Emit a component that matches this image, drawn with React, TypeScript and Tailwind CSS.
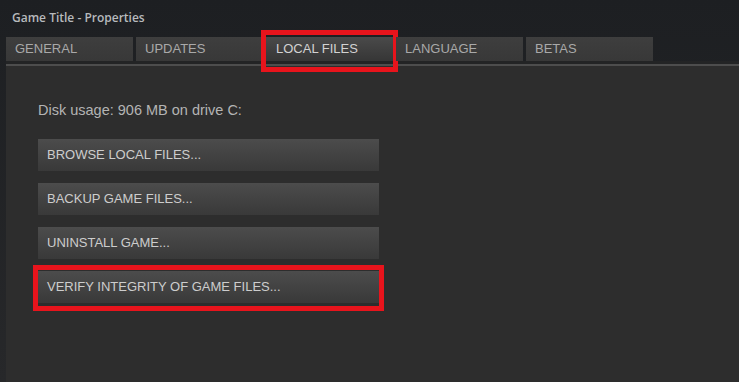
import React from 'react'

const tabs = ['GENERAL', 'UPDATES', 'LOCAL FILES', 'LANGUAGE', 'BETAS']

const actions = [
    'BROWSE LOCAL FILES...',
    'BACKUP GAME FILES...',
    'UNINSTALL GAME...',
    'VERIFY INTEGRITY OF GAME FILES...',
]

function App() {
    return (
        <div className="w-[739px] h-[382px] overflow-hidden flex flex-col bg-gradient-to-b from-[#1d1f22] to-[#27282a] font-['Liberation_Sans',Arial,sans-serif]">
            <div className="h-[37px] pl-[12px] pt-[9px] text-[12px] leading-[18px] font-semibold text-[#b7babd] font-['Open_Sans',sans-serif]">
                Game Title - Properties
            </div>
            <div className="flex gap-[3px] pl-[6px] h-[24px]">
                {tabs.map((t) => {
                    const active = t === 'LOCAL FILES'
                    return (
                        <div
                            key={t}
                            className={
                                active
                                    ? 'relative w-[127px] pl-[10px] flex items-center text-[13px] text-[#d2d2d2] bg-gradient-to-b from-[#4a4a4a] to-[#363636]'
                                    : 'relative w-[127px] pl-[9px] flex items-center text-[13px] text-[#a9a9a9] bg-gradient-to-b from-[#3e3e3e] to-[#383838]'
                            }
                        >
                            {t}
                            {active && (
                                <div className="absolute -left-[5px] -right-[5px] -top-[7px] -bottom-[11px] border-[5px] border-[#e8141c] pointer-events-none" />
                            )}
                        </div>
                    )
                })}
            </div>
            <div className="h-[3px] ml-[6px] bg-[#232425]" />
            <div className="flex-1 ml-[6px] bg-[#2d2d2d] border-t-2 border-[#4d4d4d] pl-[32px] pt-[36px]">
                <p className="text-[14.5px] leading-[16px] text-[#b4b4b4]">Disk usage: 906 MB on drive C:</p>
                <div className="mt-[21px] flex flex-col gap-[12px]">
                    {actions.map((a, idx) => (
                        <div
                            key={a}
                            className="relative w-[341px] h-[32px] pl-[9px] flex items-center text-[13px] text-[#cdcdcd] bg-gradient-to-b from-[#4c4c4c] to-[#393939]"
                        >
                            {a}
                            {idx === 3 && (
                                <div className="absolute -left-[5px] -right-[5px] -top-[6px] -bottom-[8px] border-[5px] border-[#e8141c] pointer-events-none" />
                            )}
                        </div>
                    ))}
                </div>
            </div>
        </div>
    )
}

export default App
